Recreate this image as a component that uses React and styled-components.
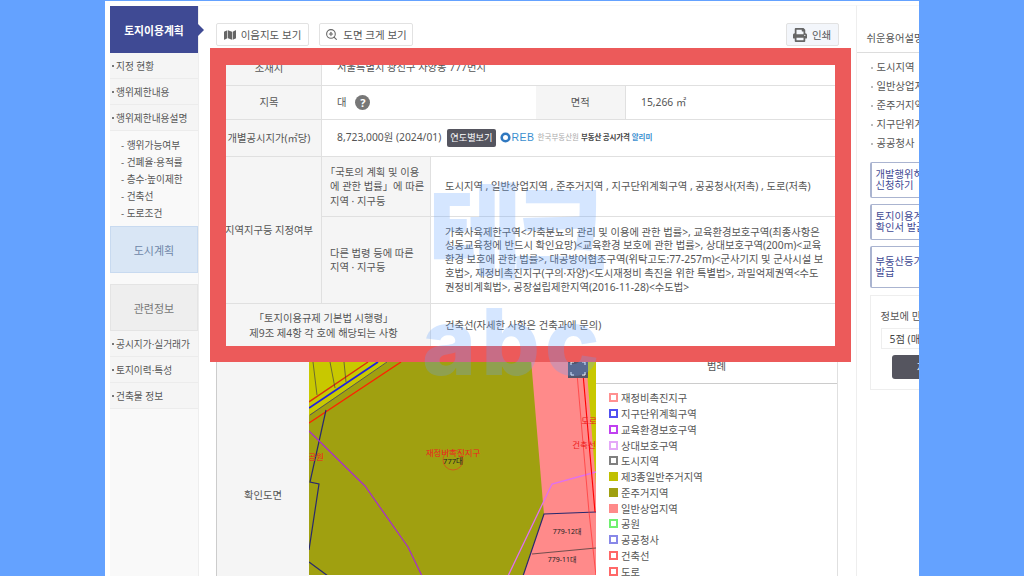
import React from "react";
import styled, { createGlobalStyle } from "styled-components";
import { FaMap, FaPrint } from "react-icons/fa";
import { ZoomIn } from "lucide-react";

const GlobalStyle = createGlobalStyle`
    html, body { margin: 0; padding: 0; background: #64a2ff; }
    * { box-sizing: border-box; }
    body { font-family: "Noto Sans", "Noto Sans CJK KR", sans-serif; color: #555; }
`;

const Stage = styled.div`
    position: relative;
    width: 1024px;
    height: 576px;
    overflow: hidden;
    background: #64a2ff;
    padding: 1px 105px 0;
`;

const Page = styled.div`
    display: flex;
    height: 575px;
    padding: 4px 0 0 5px;
    background: #fff;
    overflow: hidden;
    font-size: 10.3px;
`;

/* left menu */
const Side = styled.nav`
    flex: 0 0 89px;
    display: flex;
    flex-direction: column;
    margin-top: 1px;
    background: #f9f9f9;
    border-right: 1px solid #eee;
    font-size: 9.7px;
`;

const SideTitle = styled.div`
    position: relative;
    height: 47px;
    display: flex;
    align-items: center;
    justify-content: center;
    background: #3f4a94;
    color: #fff;
    font-size: 10.8px;
    font-weight: 700;

    &::after {
        content: "";
        position: absolute;
        left: 100%;
        top: 18px;
        border-left: 6px solid #3f4a94;
        border-top: 6px solid transparent;
        border-bottom: 6px solid transparent;
    }
`;

const SideItem = styled.div`
    height: 26px;
    display: flex;
    align-items: center;
    padding-left: 2px;
    background: #f5f5f5;
    border-bottom: 1px solid #ececec;
    color: #555;

    &::before {
        content: "";
        width: 2px;
        height: 2px;
        margin-right: 2px;
        background: #777;
    }
`;

const SubList = styled.div`
    padding: 6px 0 3px 11px;
    height: 95px;
`;

const SubItem = styled.div`
    height: 17px;
    line-height: 17px;
    color: #555;
`;

const SideHead = styled.div`
    height: 47px;
    display: flex;
    align-items: center;
    justify-content: center;
    font-size: 11px;
    color: ${(props) => props.$text};
    background: ${(props) => props.$fill};
    border: 1px solid ${(props) => props.$line};
`;

const SideGap = styled.div`
    height: 11px;
`;

/* centre column */
const Main = styled.main`
    flex: 0 0 656px;
    padding: 0 17px;
    border-top: 1px solid #f8f8f8;
`;

const Toolbar = styled.div`
    display: flex;
    gap: 10px;
    height: 44px;
    padding-top: 17px;
`;

const ToolButton = styled.div`
    height: 23px;
    display: flex;
    align-items: center;
    justify-content: center;
    gap: 5px;
    width: ${(props) => props.$width}px;
    margin-left: ${(props) => (props.$right ? "auto" : "0")};
    border: 1px solid #e2e2e2;
    border-radius: 2px;
    background: ${(props) => (props.$right ? "#f3f6fb" : "#fff")};
    color: #555;
    font-size: 10.5px;
`;

const InfoTable = styled.table`
    width: 622px;
    height: 297px;
    table-layout: fixed;
    border-collapse: collapse;
    border-left: 1px solid #ccc;
`;

const Row = styled.tr`
    height: ${(props) => props.$height}px;
`;

const Head = styled.th`
    padding: 0 2px;
    background: #f5f5f5;
    border: 1px solid #e0e0e0;
    border-left: 0;
    font-weight: 400;
    color: #555;
    line-height: 14.5px;
    text-align: center;
`;

const SubHead = styled(Head)`
    padding-left: 8px;
    text-align: left;
    white-space: nowrap;
`;

const Bracket = styled.span`
    margin-left: -5px;
`;

const Cell = styled.td`
    padding: 0 10px 0 ${(props) => props.$pad || 15}px;
    border: 1px solid #e0e0e0;
    border-left: ${(props) => (props.$strong ? "1px solid #ccc" : "0")};
    border-right: 0;
    color: #555;
    line-height: 13.8px;
    vertical-align: middle;
`;

const Strong = styled(Row)`
    & > * {
        border-top: 1px solid #aaa;
    }
`;

const Inline = styled.div`
    display: flex;
    align-items: center;
`;

const HelpMark = styled.span`
    width: 15px;
    height: 15px;
    margin-left: 9px;
    border-radius: 50%;
    background: #777;
    color: #fff;
    font-size: 11px;
    font-weight: 700;
    line-height: 15px;
    text-align: center;
`;

const YearButton = styled.span`
    height: 18px;
    padding: 0 3px;
    margin-left: 6px;
    border-radius: 2px;
    background: #55555f;
    color: #fff;
    font-size: 9.2px;
    line-height: 18px;
`;

const RebLogo = styled.div`
    display: flex;
    align-items: center;
    margin-left: 4px;
    font-size: 7.5px;
    white-space: nowrap;
`;

const RebMark = styled.span`
    margin: 0 3px 0 1px;
    font-family: "Liberation Sans", sans-serif;
    font-size: 10.5px;
    color: #3b8fd0;
    letter-spacing: 0.5px;
`;

const RebName = styled.span`
    color: #aaa;
    margin-right: 2px;
`;

const RebTitle = styled.span`
    color: #444;
    font-weight: 700;
    letter-spacing: -0.2px;
`;

const RebBlue = styled.span`
    margin-left: 2px;
    color: #3b8fd0;
    font-weight: 700;
`;

const MapRow = styled.div`
    display: flex;
    width: 622px;
    height: 292px;
    border-left: 1px solid #ccc;
    border-right: 1px solid #e0e0e0;
`;

const MapHead = styled.div`
    flex: 0 0 92px;
    display: flex;
    align-items: center;
    justify-content: center;
    background: #f5f5f5;
`;

const MapDrawing = styled.svg`
    flex: 0 0 287px;
    display: block;
    height: 227px;
`;

const Legend = styled.div`
    flex: 1;
`;

const LegendTitle = styled.div`
    height: 36px;
    padding-top: 10px;
    text-align: center;
    line-height: 16px;
    border-bottom: 1px solid #ccc;
`;

const LegendList = styled.div`
    padding: 6px 0 0 13px;
`;

const LegendItem = styled.div`
    display: flex;
    align-items: center;
    height: 15.75px;
    gap: 3px;
`;

const Swatch = styled.span`
    width: 9px;
    height: 9px;
    border: 2px solid ${(props) => props.$tone};
    background: ${(props) => (props.$filled ? props.$tone : "#fff")};
`;

/* right column */
const Aside = styled.aside`
    flex: 0 0 170px;
    border-left: 1px solid #eee;
    border-top: 1px solid #f8f8f8;
`;

const AsideTitle = styled.div`
    height: 47px;
    padding: 25px 0 0 10px;
    line-height: 15px;
    border-bottom: 1px solid #ddd;
`;

const TermList = styled.ul`
    list-style: none;
    margin: 0;
    padding: 5px 0 0 20px;
`;

const Term = styled.li`
    height: 19px;
    line-height: 19px;
    position: relative;

    &::before {
        content: "";
        position: absolute;
        left: -6px;
        top: 9px;
        width: 2px;
        height: 2px;
        background: #bbb;
    }
`;

const LinkList = styled.div`
    display: flex;
    flex-direction: column;
    gap: 6px;
    margin: 9px 0 0 13px;
    width: 140px;
`;

const LinkBox = styled.div`
    height: ${(props) => props.$height}px;
    display: flex;
    align-items: center;
    padding-left: 4px;
    border: 1px solid #aab4d0;
    border-left-width: 2px;
    border-radius: 2px;
    color: #3f4a94;
    line-height: 11px;
`;

const Survey = styled.div`
    width: 140px;
    height: 95px;
    margin: 7px 0 0 13px;
    padding: 12px 0 0 10px;
    border: 1px solid #eee;
`;

const SurveySelect = styled.div`
    width: 110px;
    height: 21px;
    margin: 5px 0 6px;
    padding-left: 8px;
    line-height: 21px;
    border: 1px solid #eee;
    color: #444;
    white-space: nowrap;
`;

const SurveyButton = styled.div`
    width: 70px;
    height: 24px;
    margin-left: 11px;
    border-radius: 3px;
    background: #55555f;
    color: #fff;
    line-height: 24px;
    text-align: center;
`;

/* things lying over the page */
const RedFrame = styled.div`
    position: absolute;
    left: 210px;
    top: 48px;
    width: 641px;
    height: 314px;
    border: 16px solid #ec5a5a;
    border-top-width: 17px;
`;

const Watermark = styled.div`
    position: absolute;
    left: ${(props) => props.$left}px;
    top: ${(props) => props.$top}px;
    font-family: ${(props) => props.$font};
    font-size: ${(props) => props.$size}px;
    font-weight: 800;
    line-height: 1;
    letter-spacing: ${(props) => props.$spacing}px;
    color: rgba(100, 162, 255, 0.27);
    white-space: nowrap;
`;

const menuTop = ["지정 현황", "행위제한내용", "행위제한내용설명"];
const menuSub = ["행위가능여부", "건폐율·용적률", "층수·높이제한", "건축선", "도로조건"];
const menuBottom = ["공시지가·실거래가", "토지이력·특성", "건축물 정보"];
const terms = ["도시지역", "일반상업지역", "준주거지역", "지구단위계획구역", "공공청사"];

const legendItems = [
    { label: "재정비촉진지구", color: "#ff9090" },
    { label: "지구단위계획구역", color: "#5050f0" },
    { label: "교육환경보호구역", color: "#c040f0" },
    { label: "상대보호구역", color: "#e4a8f8" },
    { label: "도시지역", color: "#808080" },
    { label: "제3종일반주거지역", color: "#c0c000", filled: true },
    { label: "준주거지역", color: "#a0a010", filled: true },
    { label: "일반상업지역", color: "#ff8a8a", filled: true },
    { label: "공원", color: "#70f070" },
    { label: "공공청사", color: "#8888e8" },
    { label: "건축선", color: "#ff6868" },
    { label: "도로", color: "#ff6868" },
];

function LandMap() {
    return (
        <MapDrawing viewBox="309 348 287 227">
            <rect x="309" y="347" width="287" height="229" fill="#a0a010" />
            <polygon points="309,347 410,347 309,415" fill="#c8c800" />
            <polygon points="530,347 596,347 596,576 523,576 544,514 543,503" fill="#ff8a8a" />
            <polygon points="585,347 596,347 596,485" fill="#c8c800" />
            <path d="M309 402 L368 362" stroke="#d83010" strokeWidth="1.5" />
            <path d="M309 408 L378 362" stroke="#2020e0" strokeWidth="1.8" />
            <path d="M310 415 L387 362" stroke="#555" strokeWidth="1" />
            <path d="M309 423 L401 362" stroke="#ff2000" strokeWidth="1.4" />
            <path d="M313 362 L317 395 M330 362 L335 388 M344 362 L346 382" stroke="#444" strokeWidth="0.7" />
            <path d="M326 410 L310 482 L319 484 L309 550" stroke="#28286e" strokeWidth="1.2" fill="none" />
            <path d="M309 562 L328 576" stroke="#28286e" strokeWidth="1.2" />
            <path d="M309 431 L365 486 L408 547 L422 576" stroke="#a830c8" strokeWidth="1.3" fill="none" />
            <path d="M596 472 L552 484 L508 576" stroke="#e070f0" strokeWidth="1.3" fill="none" />
            <path d="M523 576 L544 514 L596 512" stroke="#28286e" strokeWidth="1.2" fill="none" />
            <path d="M532 554 L596 548" stroke="#333" strokeWidth="0.7" />
            <path d="M582 362 L595 512" stroke="#ff0000" strokeWidth="1.1" />
            <path d="M576 362 L589 512 L596 576" stroke="#ff3030" strokeWidth="0.7" fill="none" />
            <circle cx="453" cy="460" r="10" fill="none" stroke="#e04020" strokeWidth="0.7" />
            <text x="453" y="456" textAnchor="middle" fontSize="8.5" fill="#ee2020">재정비촉진지구</text>
            <text x="453" y="464" textAnchor="middle" fontSize="7.5" fill="#222">777대</text>
            <text x="567" y="534" textAnchor="middle" fontSize="7" fill="#222">779-12대</text>
            <text x="562" y="562" textAnchor="middle" fontSize="7" fill="#222">779-11대</text>
            <text x="584" y="448" textAnchor="middle" fontSize="8.5" fill="#ee2020">건축선</text>
            <text x="589" y="424" textAnchor="middle" fontSize="8.5" fill="#ee2020">도로</text>
            <text x="316" y="460" textAnchor="middle" fontSize="8.5" fill="#ee2020">공원</text>
            <rect x="568" y="358" width="20" height="20" fill="#55556a" />
            <path d="M571 365 V362 H574 M582 362 H585 V365 M585 372 V375 H582 M574 375 H571 V372" stroke="#fff" fill="none" />
        </MapDrawing>
    );
}

function App() {
    return (
        <Stage>
            <GlobalStyle />
            <Page>
                <Side>
                    <SideTitle>토지이용계획</SideTitle>
                    {menuTop.map((label) => (
                        <SideItem key={label}>{label}</SideItem>
                    ))}
                    <SubList>
                        {menuSub.map((label) => (
                            <SubItem key={label}>- {label}</SubItem>
                        ))}
                    </SubList>
                    <SideHead $text="#6f86a8" $fill="#d9e6f5" $line="#c8daf0">도시계획</SideHead>
                    <SideGap />
                    <SideHead $text="#777" $fill="#eee" $line="#e4e4e4">관련정보</SideHead>
                    {menuBottom.map((label) => (
                        <SideItem key={label}>{label}</SideItem>
                    ))}
                </Side>

                <Main>
                    <Toolbar>
                        <ToolButton $width={93}><FaMap size={12} color="#666" />이음지도 보기</ToolButton>
                        <ToolButton $width={94}><ZoomIn size={13} color="#666" />도면 크게 보기</ToolButton>
                        <ToolButton $width={53} $right><FaPrint size={14} color="#666" />인쇄</ToolButton>
                    </Toolbar>

                    <InfoTable>
                        <colgroup>
                            <col width="105" />
                            <col width="109" />
                            <col width="105" />
                            <col width="90" />
                            <col width="213" />
                        </colgroup>
                        <tbody>
                            <Row $height={35}>
                                <Head>소재지</Head>
                                <Cell colSpan={4}>서울특별시 광진구 자양동 777번지</Cell>
                            </Row>
                            <Row $height={34}>
                                <Head>지목</Head>
                                <Cell colSpan={2}>
                                    <Inline>대<HelpMark>?</HelpMark></Inline>
                                </Cell>
                                <Head>면적</Head>
                                <Cell>15,266 ㎡</Cell>
                            </Row>
                            <Row $height={37}>
                                <Head>개별공시지가(㎡당)</Head>
                                <Cell colSpan={4}>
                                    <Inline>
                                        8,723,000원 (2024/01)
                                        <YearButton>연도별보기</YearButton>
                                        <RebLogo>
                                            <svg width="11" height="11" viewBox="0 0 11 11">
                                                <circle cx="5.5" cy="5.5" r="3.8" fill="none" stroke="#2f78c0" strokeWidth="2.6" />
                                            </svg>
                                            <RebMark>REB</RebMark>
                                            <RebName>한국부동산원</RebName>
                                            <RebTitle>부동산 공시가격</RebTitle>
                                            <RebBlue>알리미</RebBlue>
                                        </RebLogo>
                                    </Inline>
                                </Cell>
                            </Row>
                            <Strong $height={60}>
                                <Head rowSpan={2}>지역지구등 지정여부</Head>
                                <SubHead><Bracket>「</Bracket>국토의 계획 및 이용<br />에 관한 법률」에 따른<br />지역 · 지구등</SubHead>
                                <Cell colSpan={3} $pad={14} $strong>
                                    도시지역 , 일반상업지역 , 준주거지역 , 지구단위계획구역 , 공공청사(저촉) , 도로(저촉)
                                </Cell>
                            </Strong>
                            <Row $height={87}>
                                <SubHead>다른 법령 등에 따른<br />지역 · 지구등</SubHead>
                                <Cell colSpan={3} $pad={14} $strong>
                                    가축사육제한구역&lt;가축분뇨의 관리 및 이용에 관한 법률&gt;, 교육환경보호구역(최종사항은<br />
                                    성동교육청에 반드시 확인요망)&lt;교육환경 보호에 관한 법률&gt;, 상대보호구역(200m)&lt;교육<br />
                                    환경 보호에 관한 법률&gt;, 대공방어협조구역(위탁고도:77-257m)&lt;군사기지 및 군사시설 보<br />
                                    호법&gt;, 재정비촉진지구(구의·자양)&lt;도시재정비 촉진을 위한 특별법&gt;, 과밀억제권역&lt;수도<br />
                                    권정비계획법&gt;, 공장설립제한지역(2016-11-28)&lt;수도법&gt;
                                </Cell>
                            </Row>
                            <Row $height={44}>
                                <Head colSpan={2}>「토지이용규제 기본법 시행령」<br />제9조 제4항 각 호에 해당되는 사항</Head>
                                <Cell colSpan={3} $pad={14} $strong>건축선(자세한 사항은 건축과에 문의)</Cell>
                            </Row>
                        </tbody>
                    </InfoTable>

                    <MapRow>
                        <MapHead>확인도면</MapHead>
                        <LandMap />
                        <Legend>
                            <LegendTitle>범례</LegendTitle>
                            <LegendList>
                                {legendItems.map((item) => (
                                    <LegendItem key={item.label}>
                                        <Swatch $tone={item.color} $filled={item.filled} />
                                        {item.label}
                                    </LegendItem>
                                ))}
                            </LegendList>
                        </Legend>
                    </MapRow>
                </Main>

                <Aside>
                    <AsideTitle>쉬운용어설명</AsideTitle>
                    <TermList>
                        {terms.map((label) => (
                            <Term key={label}>{label}</Term>
                        ))}
                    </TermList>
                    <LinkList>
                        <LinkBox $height={36}>개발행위허가<br />신청하기</LinkBox>
                        <LinkBox $height={36}>토지이용계획<br />확인서 발급</LinkBox>
                        <LinkBox $height={42}>부동산등기부<br />발급</LinkBox>
                    </LinkList>
                    <Survey>
                        정보에 만족하십니까?
                        <SurveySelect>5점 (매우 만족)</SurveySelect>
                        <SurveyButton>제출</SurveyButton>
                    </Survey>
                </Aside>
            </Page>

            <RedFrame />
            <Watermark $left={428} $top={174} $size={103} $spacing={-10} $font={'"Noto Sans CJK KR", sans-serif'}>테크</Watermark>
            <Watermark $left={422} $top={296} $size={92} $spacing={5} $font={'Inter, sans-serif'}>abc</Watermark>
        </Stage>
    );
}

export default App;
